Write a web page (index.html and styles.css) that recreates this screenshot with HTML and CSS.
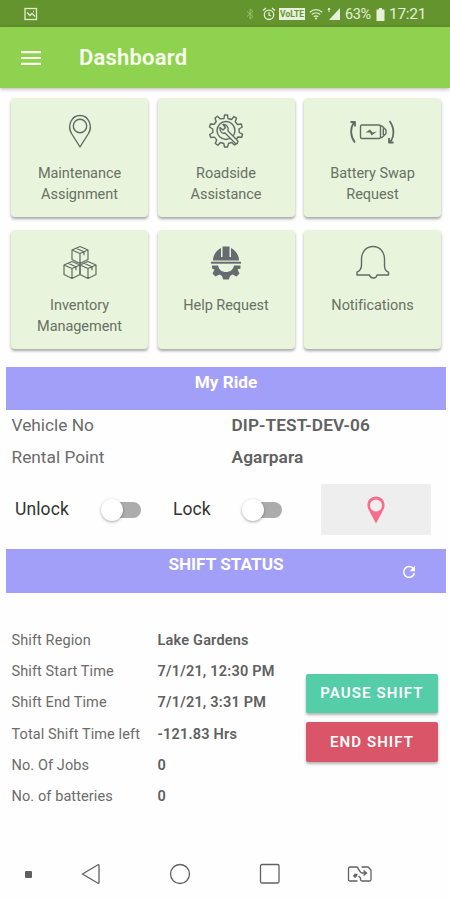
FILE: index.html
```html
<!DOCTYPE html>
<html lang="en">
<head>
<meta charset="utf-8">
<title>Dashboard</title>
<link rel="stylesheet" href="styles.css">
</head>
<body>
<div class="status">
  <svg class="s-img" width="14" height="14" viewBox="0 0 14 14"><rect x="1" y="1.5" width="11.5" height="11" fill="none" stroke="#e0ecd0" stroke-width="1.3"/><path d="M3 5.500l3 3 2-2 3 3M9 4.500h1" fill="none" stroke="#e0ecd0" stroke-width="1.300"/></svg>
  <div class="s-right">
    <svg class="s-bt" width="8" height="12" viewBox="0 0 8 12"><path d="M1 3.500l6 5L4 11V1l3 2.500-6 5" fill="none" stroke="#9dbd78" stroke-width="1"/></svg>
    <svg class="s-alarm" width="14" height="14" viewBox="0 0 14 14"><path d="M1 3.500L4 1M13 3.500L10 1M7 5v3l2 1" fill="none" stroke="#e6f0da" stroke-width="1.300"/><circle cx="7" cy="7.800" r="4.700" fill="none" stroke="#e6f0da" stroke-width="1.300"/></svg>
    <span class="volte">VoLTE</span>
    <svg class="s-wifi" width="14" height="12" viewBox="0 0 14 12"><path d="M.8 4.300Q7-1 13.200 4.300M2.800 6.500q4.200-3.500 8.400 0M4.800 8.700q2.200-1.700 4.400 0" fill="none" stroke="#e6f0da" stroke-width="1.200"/><circle cx="7" cy="10.500" r="1" fill="#e6f0da"/></svg>
    <svg class="s-sig" width="14" height="14" viewBox="0 0 14 14"><path d="M13 1v12H2z" fill="#e6f0da"/><path d="M2 1v4M1 3l1-2 1 2" stroke="#e6f0da" fill="none"/></svg>
    <span class="pct">63%</span>
    <svg class="s-bat" width="9" height="13" viewBox="0 0 9 13"><path d="M3 0h3v1.500h2.500V13H.5V1.500H3z" fill="#e6f0da"/></svg>
    <span class="time">17:21</span>
  </div>
</div>
<header class="bar">
  <svg width="20" height="14" viewBox="0 0 20 14"><path d="M0 1.200h20M0 7h20M0 12.800h20" stroke="#fafff0" stroke-width="2.200"/></svg>
  <h1>Dashboard</h1>
</header>
<main>
  <section class="cards">
    <div class="card">
      <svg width="36" height="36" viewBox="0 0 36 36"><g class="line"><path d="M18 34L9.500 20.500C5 12.500 9.500 2.500 18 2.500s13 10 8.500 18z"/><circle cx="18" cy="13" r="6.700"/></g></svg>
      <span>Maintenance<br>Assignment</span>
    </div>
    <div class="card">
      <svg width="36" height="36" viewBox="0 0 36 36"><g class="line"><path d="M16 5.500L16.500 2h3l.5 3.500 3.500 1L26 3.500l2.500 1.700-1.300 3.600 2.300 2.700 3.700-.5 1 3-3.200 2 .2 3.500 3.300 1.700-.8 3-3.800-.2-2 2.800 1.300 3.500L26.500 32l-2.800-2.600-3.200 1.100L19.500 34h-3l-.7-3.500-3.400-1-2.500 2.700-2.600-1.700 1.400-3.600-2.300-2.800-3.700.4-1-3 3.200-2-.2-3.500L1.500 14l.9-3 3.800.3 2-2.800L7 5l2.500-1.800 2.800 2.700z"/><circle cx="18" cy="17.500" r="9"/><path d="M15 11.500l2.500 3-2.500 2.500-3-2.500c-.5 4 2 6.500 5 5.500l10 10c1.500 1.500 4-.5 2.500-2.500l-9.500-9.500c1-4-1.500-7-5-6.500z" fill="#e8f5dc"/></g></svg>
      <span>Roadside<br>Assistance</span>
    </div>
    <div class="card">
      <svg class="swap" width="48" height="36" viewBox="0 0 48 36"><g class="line"><rect x="12.500" y="12" width="20" height="13.500" rx="1.500"/><path d="M32.500 13h1.500l4 4v3.500l-4 4h-1.500M35.300 15.500v6.500"/><path class="arc" d="M7 29.500C2 23 2 15 6 9.500M2.500 9H7v4.500M41.500 8c5 6.500 5 15 1 20.500M45.500 29.500H41V25"/><path d="M17.500 19.500l4.500-3 2.500 3 4.500-1-5.500 4-1.500-3z" fill="#626b62" stroke="none"/></g></svg>
      <span>Battery Swap<br>Request</span>
    </div>
    <div class="card">
      <svg width="36" height="36" viewBox="0 0 36 36"><g class="line thin"><path d="M18 1.500l8 3.500v9.500L18 18.500l-8-4V5zM10 5l8 3.500L26 5M18 8.500v10M14 3.200l8 3.500v3.500"/><path d="M10 16.500l8 3.500v9.500L10 33.500l-8-4V20zM2 20l8 3.500 8-3.500M10 23.500v10M6 18.200l8 3.500v3.500"/><path d="M26 16.500l8 3.500v9.500L26 33.500l-8-4V20zM18 20l8 3.500 8-3.500M26 23.500v10M22 18.200l8 3.500v3.500"/></g></svg>
      <span>Inventory<br>Management</span>
    </div>
    <div class="card">
      <svg width="36" height="36" viewBox="0 0 36 36"><g fill="#666b70"><path d="M5 15.500C5 9 9.500 4.500 13 3v9h1.500V1.500h7V12H23V3c3.500 1.500 8 6 8 12.500z"/><path d="M3 16.700h30v2H3z"/><path d="M4 20.500h6c1 4.500 4 6.500 8 6.500s7-2 8-6.500h6.500v3l-3 1 2 4-3 3-4-2-2.500 1.500-1.200 3.500h-5.600L14 31l-2.500-1.500-4 2-3-3 2-4-2.500-1z"/></g></svg>
      <span>Help Request</span>
    </div>
    <div class="card">
      <svg width="36" height="36" viewBox="0 0 36 36"><g class="line"><path d="M6.500 17v-3C6.500 6.500 11.500 1.500 18 1.500S29.500 6.500 29.500 14v7c0 3 1 5 4 6.200V30H22c-.5 4-6.500 4-7.500 0H2v-2.800C5.500 25.500 6.500 23.500 6.500 20z"/></g></svg>
      <span>Notifications</span>
    </div>
  </section>

  <h2 class="band ride">My Ride</h2>
  <dl class="vehicle">
    <dt>Vehicle No</dt><dd>DIP-TEST-DEV-06</dd>
    <dt>Rental Point</dt><dd>Agarpara</dd>
  </dl>
  <div class="controls">
    <span class="unlock">Unlock</span><i class="toggle"></i>
    <span class="lock">Lock</span><i class="toggle"></i>
    <div class="locate"><svg width="18" height="28" viewBox="0 0 18 28"><path fill-rule="evenodd" d="M9 27.500L2 14.500C-2 8 2 .5 9 .5s11 7.500 7 14zM9 3.500a6 6 0 1 0 0 12 6 6 0 0 0 0-12z" fill="#f76e8c"/></svg></div>
  </div>

  <h2 class="band shift-h">SHIFT STATUS
    <svg class="refresh" width="14" height="14" viewBox="0 0 14 14"><path d="M11.500 3.800A5.400 5.400 0 1 0 12.400 8" fill="none" stroke="#fff" stroke-width="1.500"/><path d="M13 .8v5.400H7.600z" fill="#fff"/></svg>
  </h2>
  <section class="shift">
    <dl>
      <dt>Shift Region</dt><dd>Lake Gardens</dd>
      <dt>Shift Start Time</dt><dd>7/1/21, 12:30 PM</dd>
      <dt>Shift End Time</dt><dd>7/1/21, 3:31 PM</dd>
      <dt>Total Shift Time left</dt><dd>-121.83 Hrs</dd>
      <dt>No. Of Jobs</dt><dd>0</dd>
      <dt>No. of batteries</dt><dd>0</dd>
    </dl>
    <div class="buttons">
      <button class="pause">PAUSE SHIFT</button>
      <button class="end">END SHIFT</button>
    </div>
  </section>
</main>
<nav class="nav">
  <i class="dot"></i>
  <svg width="20" height="22" viewBox="0 0 20 22"><path d="M1.500 11L17 1.800q1-.4 1 .7v17q0 1.100-1 .7z"/></svg>
  <svg width="22" height="22" viewBox="0 0 22 22"><circle cx="11" cy="11" r="9.500"/></svg>
  <svg width="22" height="22" viewBox="0 0 22 22"><rect x="1.500" y="1.500" width="18.500" height="18.500" rx="1.500"/></svg>
  <svg width="26" height="18" viewBox="0 0 26 18"><path d="M10.500 16H3q-1.500 0-1.500-1.500v-11Q1.500 2 3 2h6.500q1.500 0 1.500 1.500L13.500 7q.5 1 1.500 1h4M16.500 5.500L19.500 8l-3 2.500M14.500 2H21l3 3v9.500q0 1.500-1.500 1.500H15q-1.500 0-1.500-1.500v-1.500L11.500 11M8 13V9.500h2.500M6.500 11.500l1.500-2 2 2"/></svg>
</nav>
</body>
</html>
```

FILE: styles.css
```css
* { box-sizing: border-box; margin: 0; padding: 0; }
body { width: 450px; height: 900px; overflow: hidden; background: #fefefe; font-family: Roboto, "Liberation Sans", sans-serif; color: #6b6b6b; display: flex; flex-direction: column; }
svg { display: block; flex: none; }

.status { height: 27px; flex: none; background: #64942d; display: flex; justify-content: space-between; align-items: center; padding: 1px 24px 0 24px; color: #e6f0da; }
.s-right { display: flex; align-items: center; }
.s-bt { margin-right: 8px; }
.s-alarm { margin-right: 3px; }
.volte { width: 26px; height: 12px; background: #e6f0da; color: #64942d; font-size: 8.5px; line-height: 12px; font-weight: 700; text-align: center; margin-right: 4px; }
.s-wifi { margin-right: 4px; }
.s-sig { margin-right: 4px; }
.pct { font-size: 14.500px; width: 27px; letter-spacing: -.4px; margin-right: 4px; }
.s-bat { margin-right: 4px; }
.time { font-size: 15.5px; width: 37px; letter-spacing: -.3px; }

.bar { height: 61px; flex: none; background: #8fd24f; box-shadow: 0 1px 4px rgba(0,0,0,.3); display: flex; align-items: center; padding-left: 21px; gap: 38px; color: #fafff0; }
h1 { font-size: 22px; font-weight: 600; letter-spacing: .2px; }

main { padding: 10px 4px 0 6px; height: 752px; flex: none; }
.cards { display: grid; grid-template-columns: repeat(3, 137px); grid-auto-rows: 119px; gap: 13px 9.500px; padding-left: 5px; }
.card { background: #e8f5dc; border-radius: 4px; box-shadow: 0 2px 3px rgba(0,0,0,.35); display: flex; flex-direction: column; align-items: center; padding-top: 15px; }
.card span { margin-top: 13.500px; font-size: 14.500px; line-height: 21px; letter-spacing: -.05px; text-align: center; color: #697064; }
.line { fill: none; stroke: #626b62; stroke-width: 1.400; stroke-linejoin: round; }
.thin { stroke-width: 1.200; }
.arc { stroke-width: 1.800; }
.swap { margin-left: -1px; }

.band { position: relative; background: #a29ff8; color: #fff; font-weight: 700; font-size: 17.200px; text-align: center; }
.ride { margin-top: 18px; height: 42.500px; line-height: 31px; }
.vehicle { display: grid; grid-template-columns: 220px 1fr; grid-auto-rows: 31.500px; padding: .5px 0 0 5.500px; font-size: 17.300px; line-height: 31px; }
.vehicle dd { font-weight: 600; letter-spacing: .1px; color: #606060; }
.controls { height: 51px; margin-top: 11px; display: flex; align-items: center; padding-left: 9px; color: #333; font-size: 17.500px; }
.controls span { margin-top: -1px; letter-spacing: .1px; }
.unlock { width: 87px; }
.lock { width: 71px; }
.toggle { position: relative; width: 38px; height: 16px; border-radius: 8px; background: linear-gradient(90deg, transparent 12px, #acacac 12px); margin: 0 32px 0 1px; }
.lock + .toggle { margin: 0 33px 0 0; }
.toggle::before { content: ""; position: absolute; left: -2px; top: -3px; width: 22px; height: 22px; border-radius: 50%; background: #fff; box-shadow: 0 1px 3px rgba(0,0,0,.35); }
.locate { width: 110px; height: 51px; margin-left: 5.500px; background: #eee; display: flex; justify-content: center; align-items: center; }
.shift-h { margin-top: 14px; height: 44px; line-height: 31px; }
.refresh { position: absolute; right: 30px; top: 16px; }

.shift { display: flex; padding: 31.500px 8px 0 5.500px; justify-content: space-between; }
.shift dl { display: grid; grid-template-columns: 146px 130px; grid-auto-rows: 31.400px; font-size: 14.500px; line-height: 32px; letter-spacing: .1px; white-space: nowrap; }
.shift dd { font-weight: 600; letter-spacing: .2px; color: #606060; }
.buttons { width: 132px; padding-top: 49px; display: flex; flex-direction: column; gap: 9px; }
button { height: 39.500px; border: 0; border-radius: 2px; color: #fff; font: 600 15px Roboto, sans-serif; letter-spacing: 1.100px; box-shadow: 0 2px 3px rgba(0,0,0,.3); }
.pause { background: #55cda8; }
.end { background: #d95567; }

.nav { height: 60px; display: flex; align-items: center; padding: 8px 0 0 25px; }
.nav svg { fill: none; stroke: #606060; stroke-width: 1.300; }
.dot { width: 7px; height: 7px; background: #606060; border-radius: 1px; margin-right: 49px; }
.nav svg:nth-of-type(1) { margin-right: 68px; }
.nav svg:nth-of-type(2) { margin-right: 68px; }
.nav svg:nth-of-type(3) { margin-right: 66px; }
```
